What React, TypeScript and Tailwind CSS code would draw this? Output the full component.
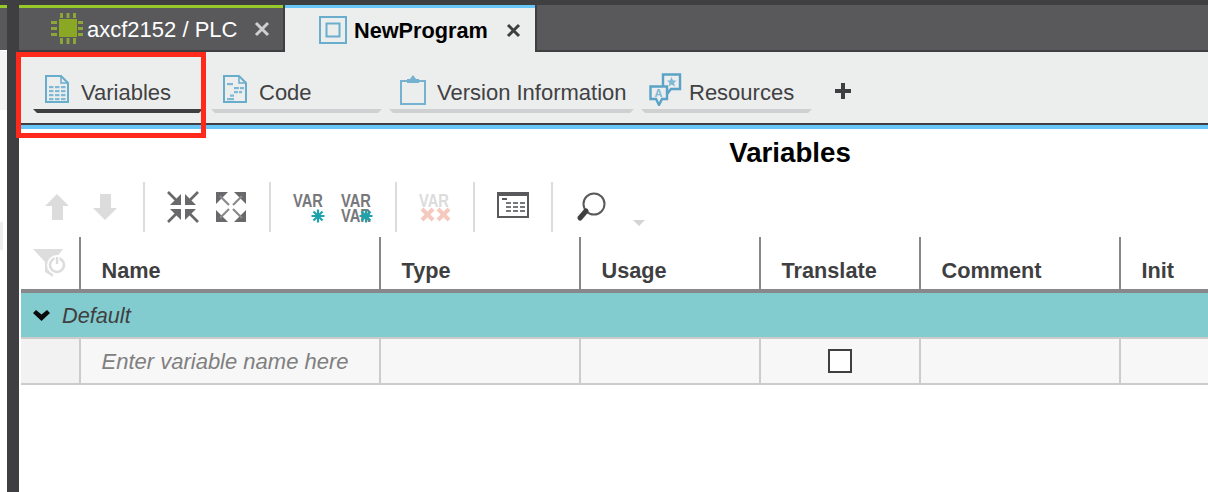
const columns = [
  { name: "Name", width: "w-[300px]" },
  { name: "Type", width: "w-[200px]" },
  { name: "Usage", width: "w-[180px]" },
  { name: "Translate", width: "w-[160px]" },
  { name: "Comment", width: "w-[200px]" },
  { name: "Init", width: "w-[200px]" },
];

const mirrors = ["", "translate(32 0) scale(-1 1)", "translate(0 32) scale(1 -1)", "translate(32 32) scale(-1 -1)"];

function ChipIcon() {
  return (
    <svg width="32" height="32" viewBox="0 0 32 32">
      <rect x="8" y="6" width="18" height="18" fill="#8aa823" />
      <g fill="#8ca63a">
        <rect x="9" y="0" width="3" height="5" />
        <rect x="15.5" y="0" width="3" height="5" />
        <rect x="22" y="0" width="3" height="5" />
        <rect x="9" y="25" width="3" height="6" />
        <rect x="15.5" y="25" width="3" height="6" />
        <rect x="22" y="25" width="3" height="6" />
        <rect x="0" y="8" width="6" height="3" />
        <rect x="0" y="14" width="6" height="3" />
        <rect x="0" y="20" width="6" height="3" />
        <rect x="27" y="8" width="5" height="3" />
        <rect x="27" y="14" width="5" height="3" />
        <rect x="27" y="20" width="5" height="3" />
      </g>
    </svg>
  );
}

function ProgramIcon() {
  return (
    <svg width="28" height="28" viewBox="0 0 28 28" fill="none" stroke="#6aaecd">
      <rect x="1" y="1" width="26" height="26" strokeWidth="2" />
      <rect x="7.5" y="7.5" width="13" height="13" strokeWidth="2" />
    </svg>
  );
}

function TableDocIcon() {
  return (
    <svg width="24" height="28" viewBox="0 0 24 28" fill="none">
      <path d="M1 1H16L23 8V27H1Z" stroke="#69adcd" strokeWidth="2" />
      <path d="M16 1V8H23" stroke="#69adcd" strokeWidth="1.5" />
      <g fill="#7db8d5">
        {[11, 15, 19, 23].map((y) => (
          <g key={y}>
            <rect x="4" y={y} width="4.5" height="2.2" />
            <rect x="10" y={y} width="4.5" height="2.2" />
            <rect x="16" y={y} width="4.5" height="2.2" />
          </g>
        ))}
      </g>
    </svg>
  );
}

function CodeDocIcon() {
  return (
    <svg width="24" height="28" viewBox="0 0 24 28" fill="none">
      <path d="M1 1H16L23 8V27H1Z" stroke="#69adcd" strokeWidth="2" />
      <path d="M16 1V8H23" stroke="#69adcd" strokeWidth="1.5" />
      <g fill="#7db8d5">
        <rect x="4" y="8" width="6" height="2.2" />
        <rect x="11" y="12" width="5" height="2.2" />
        <rect x="17" y="12" width="4" height="2.2" />
        <rect x="11" y="16" width="4" height="2.2" />
        <rect x="16" y="16" width="3" height="2.2" />
        <rect x="7" y="19.5" width="4" height="2.2" />
        <rect x="4" y="23" width="7" height="2.2" />
      </g>
    </svg>
  );
}

function ClipboardIcon() {
  return (
    <svg width="26" height="31" viewBox="0 0 26 31" fill="none">
      <path d="M7 7H1V30H25V7H19" stroke="#74b2d0" strokeWidth="2" />
      <path d="M7 9V5H10L13 1L16 5H19V9Z" fill="#74b2d0" />
    </svg>
  );
}

function ResourcesIcon() {
  return (
    <svg width="33" height="33" viewBox="0 0 33 33" fill="none">
      <path d="M14 1.500H31V16H22L18 21V16H14Z" stroke="#5aa2c6" strokeWidth="2.4" fill="#eceded" />
      <path d="M22.500 4L24 7.500H27.500L25 10L26 13.500L22.500 11.500L19.500 13.500L20.500 10L18 7.500H21Z" fill="#7db8d5" />
      <path d="M1.500 13.500H18V26H13L10 32L7 26H1.500Z" stroke="#5aa2c6" strokeWidth="2.4" fill="#eceded" />
      <text x="9.500" y="24" fontSize="11" fontWeight="700" fill="#7db8d5" textAnchor="middle" fontFamily="Liberation Sans">A</text>
    </svg>
  );
}

function CollapseIcon() {
  return (
    <svg width="32" height="32" viewBox="0 0 32 32">
      {mirrors.map((m) => (
        <g key={m} transform={m}>
          <path d="M14 14H3L14 3Z" fill="#69696b" />
          <path d="M1 1L9 9" stroke="#69696b" strokeWidth="2.6" />
        </g>
      ))}
    </svg>
  );
}

function ExpandIcon() {
  return (
    <svg width="32" height="32" viewBox="0 0 32 32">
      {mirrors.map((m) => (
        <g key={m} transform={m}>
          <path d="M1 1H13L1 13Z" fill="#69696b" />
          <path d="M5 5L14 14" stroke="#8a8a8c" strokeWidth="2.2" />
        </g>
      ))}
    </svg>
  );
}

function Asterisk({ x, y }: { x: number; y: number }) {
  return (
    <g stroke="#1ea3ad" strokeWidth="2.2" fill="#1ea3ad" transform={`translate(${x} ${y})`}>
      <path d="M-6.500 0H6.500M0 -6.500V6.500M-4.500 -4.500L4.500 4.500M-4.500 4.500L4.500 -4.500" />
      <circle r="1.500" stroke="none" />
    </g>
  );
}

function VarIcon({ double = false }: { double?: boolean }) {
  return (
    <svg width="36" height="44" viewBox="0 -6 36 44">
      <g fontFamily="Liberation Sans" fontWeight="700" fontSize="14.7" fill="#77787b">
        <text transform="translate(2 16) scale(1 1.2)">VAR</text>
        {double && <text transform="translate(2 31) scale(1 1.2)">VAR</text>}
      </g>
      <Asterisk x={27} y={25} />
    </svg>
  );
}

function VarDeleteIcon() {
  return (
    <svg width="36" height="44" viewBox="0 -6 36 44">
      <text transform="translate(2 16) scale(1 1.2)" fontFamily="Liberation Sans" fontWeight="700" fontSize="14.7" fill="#dcdcdc">VAR</text>
      <g stroke="#f6c9bf" strokeWidth="4" fill="none">
        <path d="M5 18L16 29M16 18L5 29" />
        <path d="M21 18L32 29M32 18L21 29" />
      </g>
    </svg>
  );
}

function TableIcon() {
  return (
    <svg className="mb-[4px]" width="32" height="28" viewBox="0 0 32 28" fill="none">
      <rect x="1" y="2" width="30" height="24" stroke="#59595b" strokeWidth="2" />
      <rect x="1" y="1" width="30" height="4" fill="#59595b" />
      <rect x="5" y="7" width="5" height="2" fill="#59595b" />
      <g fill="#77787b">
        {[11, 15, 19].map((y) => (
          <g key={y}>
            <rect x="9" y={y} width="5" height="2" />
            <rect x="16" y={y} width="5" height="2" />
            <rect x="23" y={y} width="5" height="2" />
          </g>
        ))}
      </g>
    </svg>
  );
}

function SearchIcon() {
  return (
    <svg width="30" height="32" viewBox="0 0 30 32" fill="none">
      <circle cx="18" cy="13" r="10.500" stroke="#59595b" strokeWidth="2" fill="#fff" />
      <path d="M10 20L4 27" stroke="#3f3f41" strokeWidth="5" strokeLinecap="round" />
    </svg>
  );
}

function ToolButton({ children }: { children: React.ReactNode }) {
  return <div className="flex w-12 items-center justify-center">{children}</div>;
}

function ToolSep() {
  return <div className="mx-[14px] w-[2px] self-stretch bg-[#dcdcdc]" />;
}

function SubTab({
  icon,
  label,
  width,
  active = false,
}: {
  icon: React.ReactNode;
  label: string;
  width: string;
  active?: boolean;
}) {
  return (
    <div className={`flex h-[61px] flex-col ${width}`}>
      <div className="flex h-[57px] items-center pt-[23px]">
        <div className="mt-[-6px] flex w-12 shrink-0 pl-[12px]">{icon}</div>
        <span className="whitespace-nowrap text-[22px] text-[#414143]">{label}</span>
      </div>
      <div
        className={`h-[4px] [clip-path:polygon(0_0,100%_0,calc(100%-4px)_100%,4px_100%)] ${
          active ? "bg-[#3f3f41]" : "bg-[#cfd0d2]"
        }`}
      />
    </div>
  );
}

export default function App() {
  return (
    <div className="relative flex h-[492px] w-[1208px] overflow-hidden bg-white font-['Liberation_Sans',Arial,sans-serif]">
      {/* sliver of the neighbouring panel */}
      <div className="flex w-[7px] shrink-0 flex-col">
        <div className="h-[5px] bg-[#3f3f41]" />
        <div className="h-[3px] bg-[#97c92b]" />
        <div className="h-[42px] bg-[#59595b]" />
        <div className="h-[1px]" />
        <div className="h-[59px] bg-[#f4f4f4]" />
        <div className="mt-[112px] h-[28px] w-[3px] bg-[#eeeeee]" />
      </div>
      <div className="w-[12px] shrink-0 bg-[#3f3f41]" />

      <div className="flex min-w-0 flex-1 flex-col">
        <div className="h-[5px] shrink-0 bg-[#3f3f41]" />

        {/* editor tabs */}
        <div className="flex h-[47px] shrink-0 text-[21.7px]">
          <div className="flex w-[266px] items-center border-r-2 border-b-2 border-[#3f3f41] bg-[#59595b]">
            <div className="flex h-full w-full flex-col">
              <div className="h-[3px] bg-[#97c92b]" />
              <div className="flex flex-1 items-center pl-[32px]">
                <ChipIcon />
                <span className="ml-[4px] text-[22px] text-white">axcf2152 / PLC</span>
                <svg className="ml-[17px]" width="16" height="16" viewBox="0 0 16 16" stroke="#cfcfcf" strokeWidth="3">
                  <path d="M2 2L14 14M14 2L2 14" />
                </svg>
              </div>
            </div>
          </div>
          <div className="flex w-[252px] flex-col border-r-2 border-[#3f3f41] bg-[#eceded]">
            <div className="h-[3px] bg-[#67c5f8]" />
            <div className="flex flex-1 items-center pl-[34px]">
              <ProgramIcon />
              <span className="ml-[7px] pt-[3px] font-bold text-black">NewProgram</span>
              <svg className="ml-[18px]" width="15" height="15" viewBox="0 0 15 15" stroke="#3f3f41" strokeWidth="3">
                <path d="M2 2L13 13M13 2L2 13" />
              </svg>
            </div>
          </div>
          <div className="flex-1 border-b-2 border-[#3f3f41] bg-[#59595b]" />
        </div>

        {/* view tabs */}
        <div className="flex h-[71px] shrink-0 items-start gap-[8px] bg-[#eceded] pl-[14px]">
          <SubTab icon={<TableDocIcon />} label="Variables" width="w-[170px]" active />
          <SubTab icon={<CodeDocIcon />} label="Code" width="w-[171px]" />
          <div className="ml-[-1px]">
            <SubTab
              icon={
                <div className="ml-[-1px]">
                  <ClipboardIcon />
                </div>
              }
              label="Version Information"
              width="w-[245px]"
            />
          </div>
          <div className="ml-[-1px]">
            <SubTab
              icon={
                <div className="ml-[-4px]">
                  <ResourcesIcon />
                </div>
              }
              label="Resources"
              width="w-[171px]"
            />
          </div>
          <svg className="ml-[15px] mt-[31px]" width="16" height="16" viewBox="0 0 16 16" fill="#3f3f41">
            <path d="M6 0H10V6H16V10H10V16H6V10H0V6H6Z" />
          </svg>
        </div>
        <div className="h-[2px] shrink-0 bg-[#3f3f41]" />
        <div className="h-[4px] shrink-0 bg-[#67c5f8]" />

        {/* panel is wider than the window, as in the picture */}
        <div className="ml-[2px] w-[1538px]">
          <div className="flex h-[53px] items-center justify-center pb-[5px] text-[27.7px] font-bold text-black">
            Variables
          </div>

          <div className="flex h-[50px] pl-[12px]">
            <ToolButton>
              <svg width="24" height="26" viewBox="0 0 24 26" fill="#dcdcdc">
                <path d="M12 0L24 12H18V26H7V12H0Z" />
              </svg>
            </ToolButton>
            <ToolButton>
              <svg width="24" height="26" viewBox="0 0 24 26" fill="#dcdcdc">
                <path d="M12 26L24 14H18V0H7V14H0Z" />
              </svg>
            </ToolButton>
            <ToolSep />
            <ToolButton>
              <CollapseIcon />
            </ToolButton>
            <ToolButton>
              <ExpandIcon />
            </ToolButton>
            <ToolSep />
            <ToolButton>
              <VarIcon />
            </ToolButton>
            <ToolButton>
              <VarIcon double />
            </ToolButton>
            <ToolSep />
            <ToolButton>
              <VarDeleteIcon />
            </ToolButton>
            <ToolSep />
            <ToolButton>
              <TableIcon />
            </ToolButton>
            <ToolSep />
            <ToolButton>
              <SearchIcon />
            </ToolButton>
            <svg className="ml-[18px] mt-[38px]" width="12" height="6" viewBox="0 0 12 6" fill="#d4d4d6">
              <path d="M0 0H12L6 6Z" />
            </svg>
          </div>

          {/* table header */}
          <div className="mt-[5px] flex h-[52px]">
            <div className="flex w-[60px] items-center border-r-2 border-[#88888a] pl-[12px]">
              <svg width="34" height="30" viewBox="0 0 34 30">
                <path d="M0 1H30L20 14V29L12 24V14Z" fill="#dddddd" />
                <circle cx="24" cy="17" r="10" fill="#fff" />
                <circle cx="24" cy="17" r="7" fill="none" stroke="#dcdcdc" strokeWidth="2.600" />
                <path d="M24 8V16" stroke="#fff" strokeWidth="5" />
                <path d="M24 9V16" stroke="#dcdcdc" strokeWidth="2.400" />
              </svg>
            </div>
            {columns.map((col) => (
              <div
                key={col.name}
                className={`flex items-end border-r-2 border-[#88888a] pb-[1px] pl-[20.500px] text-[21.7px] font-bold text-[#3f3f41] ${col.width}`}
              >
                {col.name}
              </div>
            ))}
          </div>
          <div className="h-[4px] bg-[#88888a]" />

          {/* group row */}
          <div className="flex h-[44px] items-center bg-[#82cbce] pl-[12px]">
            <svg width="17" height="11" viewBox="0 0 17 11" fill="#0a0a0a">
              <path d="M0 3L3 0L8.500 4.500L14 0L17 3L8.500 11Z" />
            </svg>
            <span className="ml-[12px] pt-[2px] text-[21.7px] italic text-[#3f3f41]">Default</span>
          </div>

          {/* entry row */}
          <div className="flex h-[48px] border-y-2 border-[#cccccc] bg-[#f7f7f7]">
            <div className="w-[60px] border-r-2 border-[#cccccc] bg-[#f2f2f2]" />
            <div className="flex w-[300px] items-center border-r-2 border-[#cccccc] pl-[20.500px] text-[22px] italic text-[#808080]">
              Enter variable name here
            </div>
            <div className="w-[200px] border-r-2 border-[#cccccc]" />
            <div className="w-[180px] border-r-2 border-[#cccccc]" />
            <div className="flex w-[160px] items-center justify-center border-r-2 border-[#cccccc]">
              <div className="h-[24px] w-[24px] border-2 border-[#3f3f41] bg-white" />
            </div>
            <div className="w-[200px] border-r-2 border-[#cccccc]" />
            <div className="w-[200px] border-r-2 border-[#cccccc]" />
          </div>
        </div>
      </div>

      {/* annotation drawn over the screenshot */}
      <div className="absolute left-[16px] top-[52px] h-[86px] w-[190px] border-[5px] border-[#ff2a1c]" />
    </div>
  );
}
